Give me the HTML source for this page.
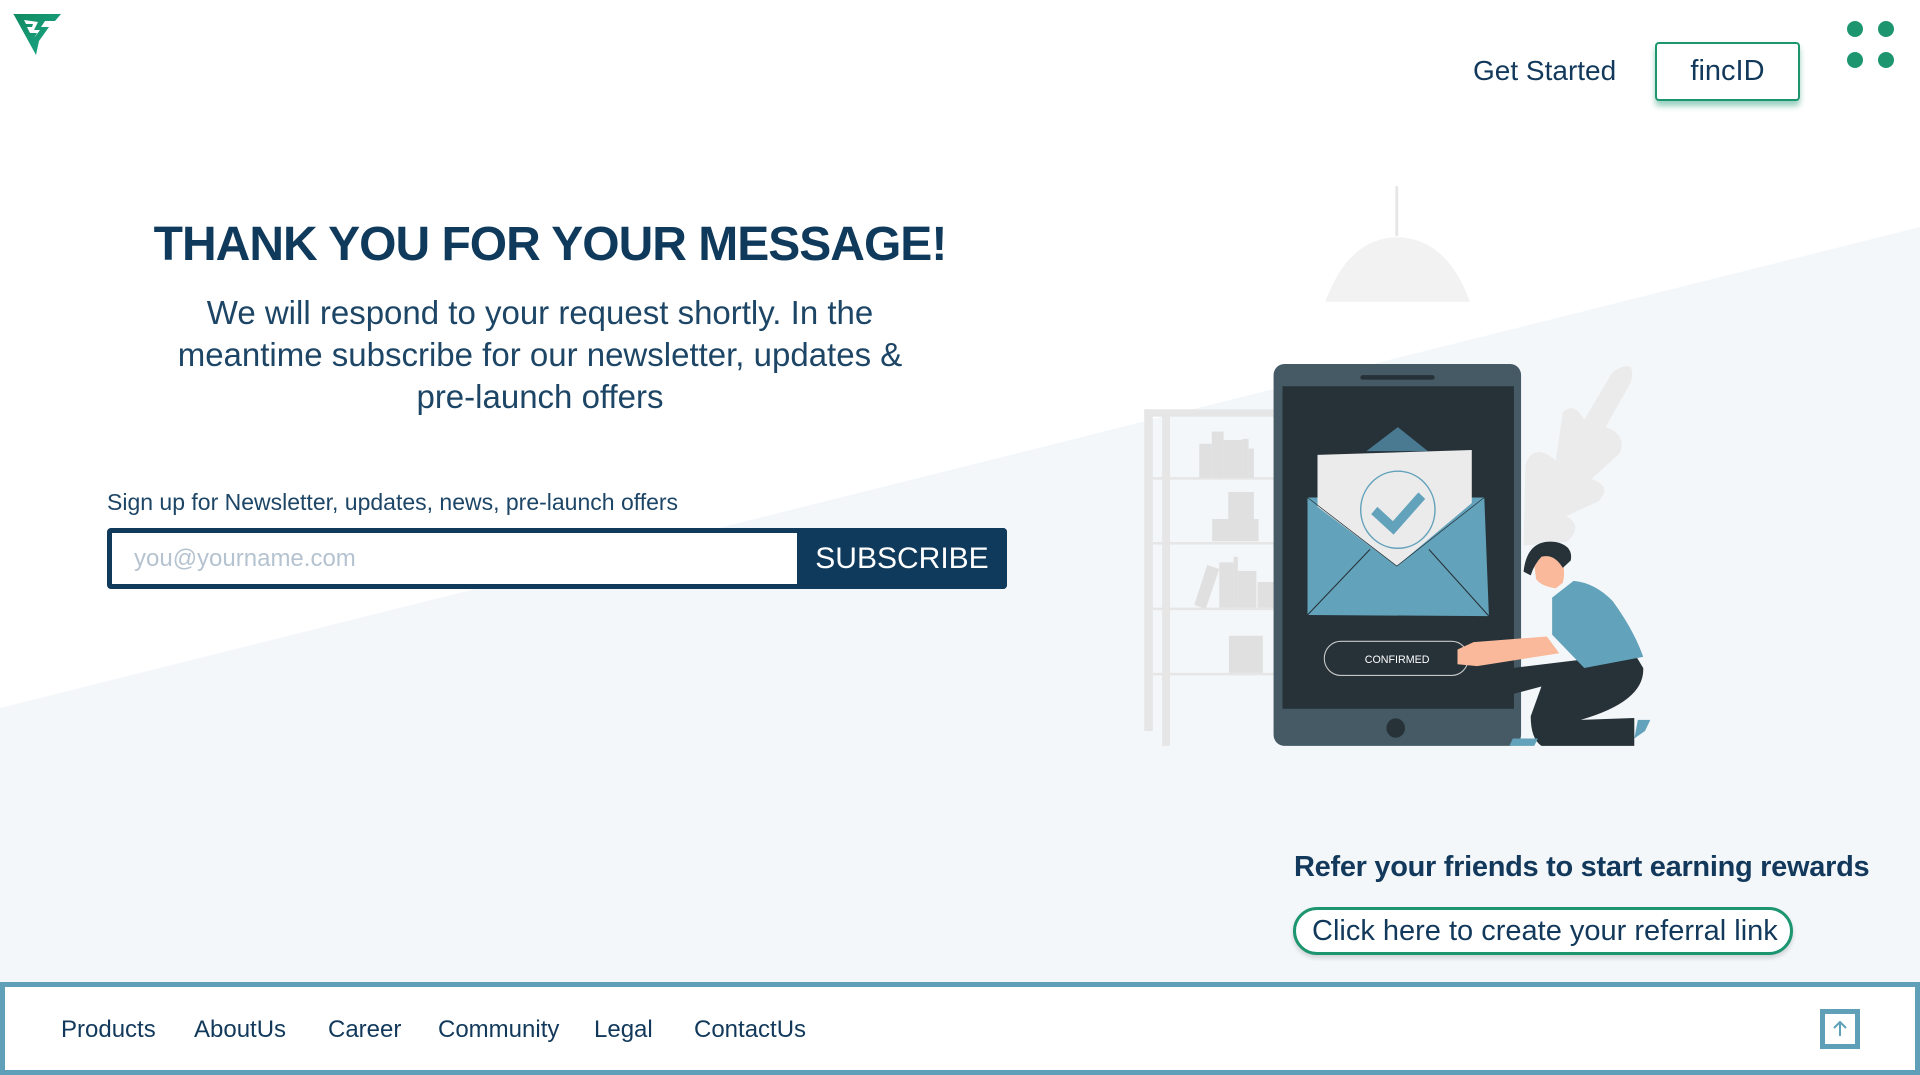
<!DOCTYPE html>
<html><head><meta charset="utf-8"><style>
*{margin:0;padding:0;box-sizing:border-box}
body{width:1920px;height:1075px;position:relative;overflow:hidden;background:#fff;font-family:"Liberation Sans",sans-serif;color:#0f3a5c}
.abs{position:absolute}
.bg{left:0;top:0;width:1920px;height:1075px}
</style></head><body>
<svg class="abs bg" width="1920" height="1075"><polygon points="0,708 1920,227 1920,1075 0,1075" fill="#f4f7fa"/></svg>

<svg class="abs" style="left:12px;top:13px" width="50" height="43" viewBox="0 0 50 43">
<defs><linearGradient id="g" x1="0" y1="0" x2="1" y2="1"><stop offset="0" stop-color="#0f8a5f"/><stop offset="1" stop-color="#1ea88a"/></linearGradient></defs>
<path d="M1 1 H49 L43 8 H33 L29 14 H37 L27 28 L24 42 L2 2 Z M12 7 L14 11 H21 L20 14 H15 L18 20 H25 L22 25 L28 17 H22 L26 9 Z" fill="url(#g)" fill-rule="evenodd"/>
</svg>

<div class="abs" style="left:1473px;top:55px;font-size:28px;color:#12395b">Get Started</div>
<div class="abs" style="left:1655px;top:42px;width:145px;height:59px;border:2px solid #1d9670;border-radius:4px;box-shadow:0 5px 6px rgba(29,150,112,.45);background:#fff;font-size:29px;text-align:center;line-height:55px;color:#12395b">fincID</div>
<svg class="abs" style="left:1840px;top:14px" width="62" height="62"><g fill="#1d9670"><circle cx="15" cy="15" r="8"/><circle cx="46" cy="15" r="8"/><circle cx="15" cy="46" r="8"/><circle cx="46" cy="46" r="8"/></g></svg>

<div class="abs" style="left:100px;top:217px;width:900px;text-align:center;font-size:48px;font-weight:bold;letter-spacing:-1px;color:#0f3a5c">THANK YOU FOR YOUR MESSAGE!</div>
<div class="abs" style="left:140px;top:292px;width:800px;text-align:center;font-size:33px;line-height:42px;color:#1d4566;font-weight:300">We will respond to your request shortly. In the<br>meantime subscribe for our newsletter, updates &amp;<br>pre-launch offers</div>

<div class="abs" style="left:107px;top:489px;font-size:23px;color:#1d4566">Sign up for Newsletter, updates, news, pre-launch offers</div>
<div class="abs" style="left:107px;top:528px;width:900px;height:61px;border:5px solid #0f3a5c;border-radius:4px;background:#fff"></div>
<div class="abs" style="left:134px;top:545px;font-size:24px;color:#b5c3d0">you@yourname.com</div>
<div class="abs" style="left:797px;top:528px;width:210px;height:61px;background:#0f3a5c;border-radius:0 4px 4px 0;color:#fff;font-size:30px;text-align:center;line-height:61px">SUBSCRIBE</div>

<svg class="abs" style="left:1120px;top:175px" width="560" height="602" viewBox="0 0 1568 1624" preserveAspectRatio="none">
<line x1="775" y1="30" x2="775" y2="165" stroke="#e6e6e6" stroke-width="8"/>
<path d="M575 342 Q640 170 775 168 Q915 170 980 342 Z" fill="#f2f2f2"/>
<g fill="#e6e6e6">
<rect x="68" y="632" width="24" height="868"/><rect x="118" y="650" width="22" height="890"/><rect x="68" y="632" width="362" height="20"/>
<rect x="92" y="815" width="338" height="7"/><rect x="92" y="990" width="338" height="7"/><rect x="92" y="1167" width="338" height="7"/><rect x="92" y="1343" width="338" height="7"/>
</g>
<g fill="#e0e0e0">
<rect x="222" y="725" width="35" height="92"/><rect x="257" y="692" width="33" height="125"/><rect x="290" y="715" width="52" height="102"/><rect x="342" y="712" width="18" height="105"/><rect x="360" y="738" width="15" height="79"/>
<rect x="258" y="928" width="130" height="60"/><rect x="303" y="855" width="72" height="73"/>
<rect x="278" y="1045" width="40" height="122"/><rect x="318" y="1030" width="12" height="137"/><rect x="330" y="1068" width="52" height="99"/><rect x="385" y="1098" width="45" height="69"/>
<polygon points="208,1160 244,1052 278,1063 240,1170"/>
<rect x="305" y="1243" width="95" height="100"/>
</g>
<path d="M1130 1000 L1135 780 Q1160 720 1220 770 L1240 640 Q1270 610 1300 660 L1380 530 Q1450 490 1430 560 L1360 680 Q1420 700 1400 750 L1320 820 Q1380 840 1340 880 L1250 920 Q1300 950 1250 990 Z" fill="#ebebeb"/>
<rect x="430" y="510" width="693" height="1030" rx="30" fill="#455a64"/>
<rect x="455" y="570" width="648" height="870" fill="#263238"/>
<rect x="673" y="540" width="208" height="12" rx="6" fill="#263238"/>
<circle cx="772" cy="1492" r="26" fill="#263238"/>
<polygon points="690,745 778,680 862,745" fill="#4a7a92"/>
<polygon points="525,870 1020,870 1033,1190 525,1187" fill="#63a2bb"/>
<polygon points="553,755 985,742 985,885 775,1055 553,895" fill="#ebebeb"/>
<polyline points="525,870 775,1055 1020,870" fill="none" stroke="#263238" stroke-width="2"/>
<line x1="525" y1="1187" x2="700" y2="1010" stroke="#263238" stroke-width="3"/>
<line x1="1033" y1="1190" x2="865" y2="1010" stroke="#263238" stroke-width="3"/>
<circle cx="778" cy="903" r="104" fill="none" stroke="#63a2bb" stroke-width="4"/>
<polyline points="712,905 765,952 845,865" fill="none" stroke="#63a2bb" stroke-width="26"/>
<rect x="572" y="1258" width="403" height="92" rx="46" fill="none" stroke="#c8c8c8" stroke-width="3"/>
<text x="776" y="1316" text-anchor="middle" fill="#fff" font-size="30" font-family="Liberation Sans">CONFIRMED</text>
<path d="M1100 1330 L1440 1290 L1465 1330 Q1470 1420 1290 1470 L1440 1465 L1440 1540 L1180 1540 Q1150 1520 1150 1460 L1180 1380 L1100 1400 Z" fill="#263238"/>
<path d="M1210 1140 L1270 1095 Q1330 1100 1380 1150 Q1440 1230 1465 1300 L1300 1330 L1250 1280 L1210 1240 Z" fill="#63a2bb"/>
<path d="M945 1280 L990 1260 L1195 1245 L1230 1290 L1000 1325 L945 1320 Z" fill="#f9b99a"/>
<path d="M1160 1050 Q1180 1000 1230 1020 Q1250 1060 1240 1100 L1220 1115 Q1180 1110 1165 1090 Z" fill="#f9b99a"/>
<path d="M1130 1070 Q1140 980 1220 990 Q1270 1000 1262 1040 L1240 1060 Q1215 1020 1180 1030 Q1160 1050 1150 1080 Z" fill="#263238"/>
<path d="M1450 1470 L1485 1470 L1470 1500 L1440 1520 Z M1100 1520 L1170 1520 L1160 1540 L1090 1540 Z" fill="#63a2bb"/>
</svg>

<div class="abs" style="left:1294px;top:851px;font-size:29px;font-weight:bold;color:#12395b;letter-spacing:-0.3px">Refer your friends to start earning rewards</div>
<div class="abs" style="left:1293px;top:907px;width:500px;height:48px;border:3px solid #1d9670;border-radius:24px;background:#fff;box-shadow:0 3px 5px rgba(0,0,0,.15);font-size:29px;line-height:42px;padding-left:16px;color:#12395b;font-weight:300">Click here to create your referral link</div>

<div class="abs" style="left:0;top:982px;width:1920px;height:93px;border:5px solid #5fa0b8;background:#fff"></div>
<div class="abs" style="top:1016px;left:0;font-size:24px;color:#12395b;width:1920px">
<span class="abs" style="left:61px">Products</span><span class="abs" style="left:194px">AboutUs</span><span class="abs" style="left:328px">Career</span><span class="abs" style="left:438px">Community</span><span class="abs" style="left:594px">Legal</span><span class="abs" style="left:694px">ContactUs</span>
</div>
<div class="abs" style="left:1820px;top:1009px;width:40px;height:40px;border:5px solid #5fa0b8;background:#fff"></div>
<svg class="abs" style="left:1830px;top:1019px" width="20" height="20"><path d="M4 9 L10 3 L16 9 M10 3 V17" fill="none" stroke="#5fa0b8" stroke-width="2"/></svg>
</body></html>
